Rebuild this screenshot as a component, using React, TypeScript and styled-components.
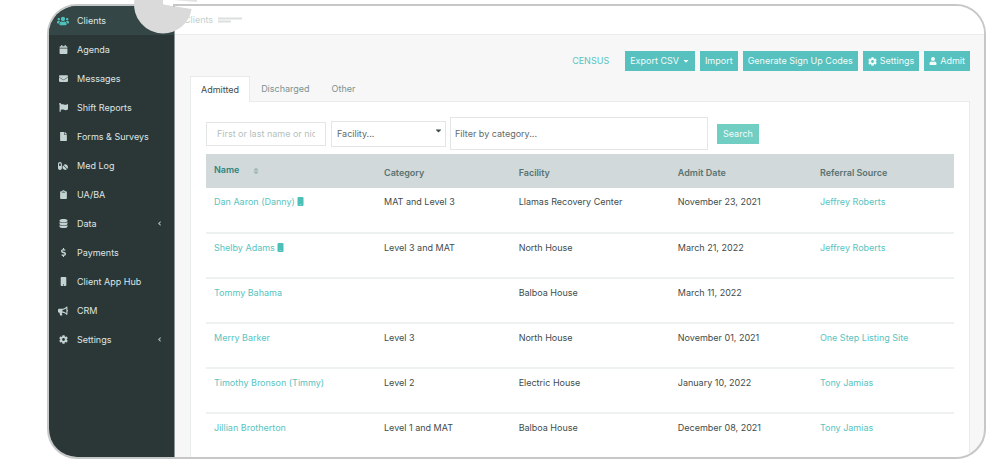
import React from 'react';
import styled, { createGlobalStyle, css } from 'styled-components';
import {
  FaUsers, FaCalendar, FaEnvelope, FaFlag, FaFile, FaPills, FaClipboard, FaDatabase,
  FaDollarSign, FaMobile, FaBullhorn, FaCog, FaAngleLeft, FaUser, FaCaretDown, FaSort,
} from 'react-icons/fa';

const GlobalStyle = createGlobalStyle`
  * { box-sizing: border-box; }
  body { margin: 0; background: #fff; font-family: Inter, "Liberation Sans", sans-serif; font-size: 9px; line-height: 12px; color: #3f4c4b; }
  a { color: #58c4bf; text-decoration: none; }
  button, input, select { font: inherit; border-radius: 0; margin: 0; }
`;

const Page = styled.div`
  position: relative;
  padding: 4px 14px 7px 47px;
`;

const Frame = styled.div`
  display: flex;
  overflow: hidden;
  border: 2px solid #c6c8c8;
  border-radius: 30px;
  background: #f7f7f7;
`;

const Sidebar = styled.nav`
  flex: 0 0 126px;
  background: #2a3736;
  border-right: 1px solid #8d9594;
`;

const NavItem = styled.a<{ $active?: boolean }>`
  display: flex;
  align-items: center;
  height: 29px;
  padding: 0 11px 0 8px;
  color: #dfe5e4;
  background: ${p => (p.$active ? '#344645' : 'transparent')};
  & > svg { color: #a9b8b6; }
`;

const NavIcon = styled.span<{ $active?: boolean }>`
  display: flex;
  justify-content: center;
  width: 12px;
  margin-right: 8px;
  color: ${p => (p.$active ? '#4fc0ba' : '#c3d3d1')};
`;

const NavLabel = styled.span`
  flex: 1;
`;

const Main = styled.main`
  flex: 1;
  min-width: 0;
`;

const TopBar = styled.header`
  display: flex;
  align-items: center;
  gap: 5px;
  height: 29px;
  padding-left: 9px;
  background: #fff;
  border-bottom: 1px solid #e9eeed;
  color: #c3cfcd;
`;

const Content = styled.div`
  padding: 16px 14px 0 15px;
`;

const Actions = styled.div`
  display: flex;
  justify-content: flex-end;
  align-items: center;
  gap: 5px;
  margin-bottom: 5px;
`;

const CensusLink = styled.a`
  margin-right: 11px;
`;

const Button = styled.button<{ $soft?: boolean }>`
  display: flex;
  align-items: center;
  gap: 3px;
  height: 20px;
  padding: 0 ${p => (p.$soft ? 6 : 5)}px;
  border: 0;
  color: #f2fbfa;
  background: ${p => (p.$soft ? '#70cec3' : '#56c1be')};
  white-space: nowrap;
`;

const Tabs = styled.div`
  display: flex;
`;

const Tab = styled.button<{ $active?: boolean }>`
  height: 25px;
  padding: 0 10px;
  border: 1px solid transparent;
  border-bottom: 0;
  background: none;
  color: #7d9290;
  ${p => p.$active && css`
    position: relative;
    background: #fff;
    border-color: #e7eceb;
    color: #3f4c4b;
    margin-bottom: -1px;
    height: 26px;
  `}
`;

const Panel = styled.section`
  padding: 15px 15px 0;
  background: #fff;
  border: 1px solid #e7eceb;
  border-bottom: 0;
`;

const Filters = styled.form`
  display: flex;
  align-items: center;
  height: 33px;
  margin-bottom: 4px;
`;

const field = css`
  border: 1px solid #e2e6e6;
  background: #fff;
  color: #5f6b6a;
  outline: 0;
`;

const NameInput = styled.input`
  ${field}
  width: 120px;
  height: 24px;
  padding: 0 10px;
  margin-right: 5px;
  &::placeholder { color: #b4bfbe; opacity: 1; }
`;

const SelectBox = styled.label`
  display: flex;
  position: relative;
  margin-right: 4px;
  & > svg { position: absolute; right: 3px; top: 5px; pointer-events: none; }
`;

const Select = styled.select`
  ${field}
  appearance: none;
  width: 115px;
  height: 26px;
  padding: 0 5px;
`;

const CategoryInput = styled.input`
  ${field}
  flex: 0 1 258px;
  height: 33px;
  padding: 0 4px;
  margin-right: 9px;
  &::placeholder { color: #5f6b6a; opacity: 1; }
`;

const Table = styled.table`
  width: 100%;
  border-collapse: collapse;
  table-layout: fixed;
`;

const Th = styled.th<{ $width?: string; $sortable?: boolean }>`
  width: ${p => p.$width || 'auto'};
  height: 34px;
  padding: ${p => (p.$sortable ? '0 8px 2px' : '4px 8px 0')};
  background: #d1d9da;
  color: ${p => (p.$sortable ? '#2f8580' : '#5a7371')};
  font-weight: 600;
  text-align: left;
  & > svg { margin-left: 10px; color: #9bb5b3; vertical-align: middle; }
`;

const Row = styled.tr`
  height: 45px;
  &:not(:last-child) { border-bottom: 2px solid #edf2f1; }
  &:last-child { height: 44px; }
`;

const Td = styled.td`
  padding: 8px 8px 0;
  vertical-align: top;
  & svg { margin-left: 2px; vertical-align: -1px; }
`;

const Pie = styled.svg`
  position: absolute;
  left: 130px;
  top: 0;
  pointer-events: none;
`;

const nav = [
  { label: 'Clients', icon: <FaUsers size={12} />, active: true },
  { label: 'Agenda', icon: <FaCalendar size={9} /> },
  { label: 'Messages', icon: <FaEnvelope size={9} /> },
  { label: 'Shift Reports', icon: <FaFlag size={9} /> },
  { label: 'Forms & Surveys', icon: <FaFile size={9} /> },
  { label: 'Med Log', icon: <FaPills size={10} /> },
  { label: 'UA/BA', icon: <FaClipboard size={9} /> },
  { label: 'Data', icon: <FaDatabase size={9} />, more: true },
  { label: 'Payments', icon: <FaDollarSign size={9} /> },
  { label: 'Client App Hub', icon: <FaMobile size={9} /> },
  { label: 'CRM', icon: <FaBullhorn size={10} /> },
  { label: 'Settings', icon: <FaCog size={9} />, more: true },
];

const clients = [
  { name: 'Dan Aaron (Danny)', phone: true, category: 'MAT and Level 3', facility: 'Llamas Recovery Center', date: 'November 23, 2021', source: 'Jeffrey Roberts' },
  { name: 'Shelby Adams', phone: true, category: 'Level 3 and MAT', facility: 'North House', date: 'March 21, 2022', source: 'Jeffrey Roberts' },
  { name: 'Tommy Bahama', category: '', facility: 'Balboa House', date: 'March 11, 2022', source: '' },
  { name: 'Merry Barker', category: 'Level 3', facility: 'North House', date: 'November 01, 2021', source: 'One Step Listing Site' },
  { name: 'Timothy Bronson (Timmy)', category: 'Level 2', facility: 'Electric House', date: 'January 10, 2022', source: 'Tony Jamias' },
  { name: 'Jillian Brotherton', category: 'Level 1 and MAT', facility: 'Balboa House', date: 'December 08, 2021', source: 'Tony Jamias' },
];

const PhoneMark = () => (
  <svg width="7" height="9" viewBox="0 0 7 9" aria-hidden="true">
    <rect x="0.5" width="6" height="9" rx="1" fill="#4dbfb9" />
    <path d="M2.5 7.5h2" stroke="#8ad6d2" />
  </svg>
);

export default function App() {
  return (
    <Page>
      <GlobalStyle />
      <Frame>
        <Sidebar>
          {nav.map(n => (
            <NavItem href="#" key={n.label} $active={n.active}>
              <NavIcon $active={n.active}>{n.icon}</NavIcon>
              <NavLabel>{n.label}</NavLabel>
              {n.more && <FaAngleLeft size={7} />}
            </NavItem>
          ))}
        </Sidebar>
        <Main>
          <TopBar>
            <span>Clients</span>
            <svg width="24" height="6" viewBox="0 0 24 6" aria-hidden="true">
              <path d="M0 1.5h24M0 4.5h13" stroke="#dcdfdf" strokeWidth="2" />
            </svg>
          </TopBar>
          <Content>
            <Actions>
              <CensusLink href="#">CENSUS</CensusLink>
              <Button>Export CSV <FaCaretDown size={8} /></Button>
              <Button>Import</Button>
              <Button>Generate Sign Up Codes</Button>
              <Button><FaCog size={9} /> Settings</Button>
              <Button><FaUser size={8} /> Admit</Button>
            </Actions>
            <Tabs>
              <Tab $active>Admitted</Tab>
              <Tab>Discharged</Tab>
              <Tab>Other</Tab>
            </Tabs>
            <Panel>
              <Filters onSubmit={e => e.preventDefault()}>
                <NameInput aria-label="Name" placeholder="First or last name or nic" />
                <SelectBox>
                  <Select aria-label="Facility"><option>Facility...</option></Select>
                  <FaCaretDown size={9} />
                </SelectBox>
                <CategoryInput aria-label="Category" placeholder="Filter by category..." />
                <Button $soft>Search</Button>
              </Filters>
              <Table>
                <thead>
                  <tr>
                    <Th $width="170px" $sortable>Name <FaSort size={8} /></Th>
                    <Th $width="18%">Category</Th>
                    <Th>Facility</Th>
                    <Th $width="19%">Admit Date</Th>
                    <Th $width="19%">Referral Source</Th>
                  </tr>
                </thead>
                <tbody>
                  {clients.map(c => (
                    <Row key={c.name}>
                      <Td><a href="#">{c.name}{c.phone && <PhoneMark />}</a></Td>
                      <Td>{c.category}</Td>
                      <Td>{c.facility}</Td>
                      <Td>{c.date}</Td>
                      <Td>{c.source && <a href="#">{c.source}</a>}</Td>
                    </Row>
                  ))}
                </tbody>
              </Table>
            </Panel>
          </Content>
        </Main>
      </Frame>
      <Pie width="70" height="36" viewBox="0 0 70 36" aria-hidden="true">
        <path d="M33 0H43V7L33 4.5Z" fill="#fff" />
        <path d="M4.4 0H33V4.5L61.6 9A29 29 0 0 1 33 33.5A29 29 0 0 1 4.4 0Z" fill="#dadada" />
        <path d="M43 0H67V2Z" fill="#e2e2e2" />
      </Pie>
    </Page>
  );
}
